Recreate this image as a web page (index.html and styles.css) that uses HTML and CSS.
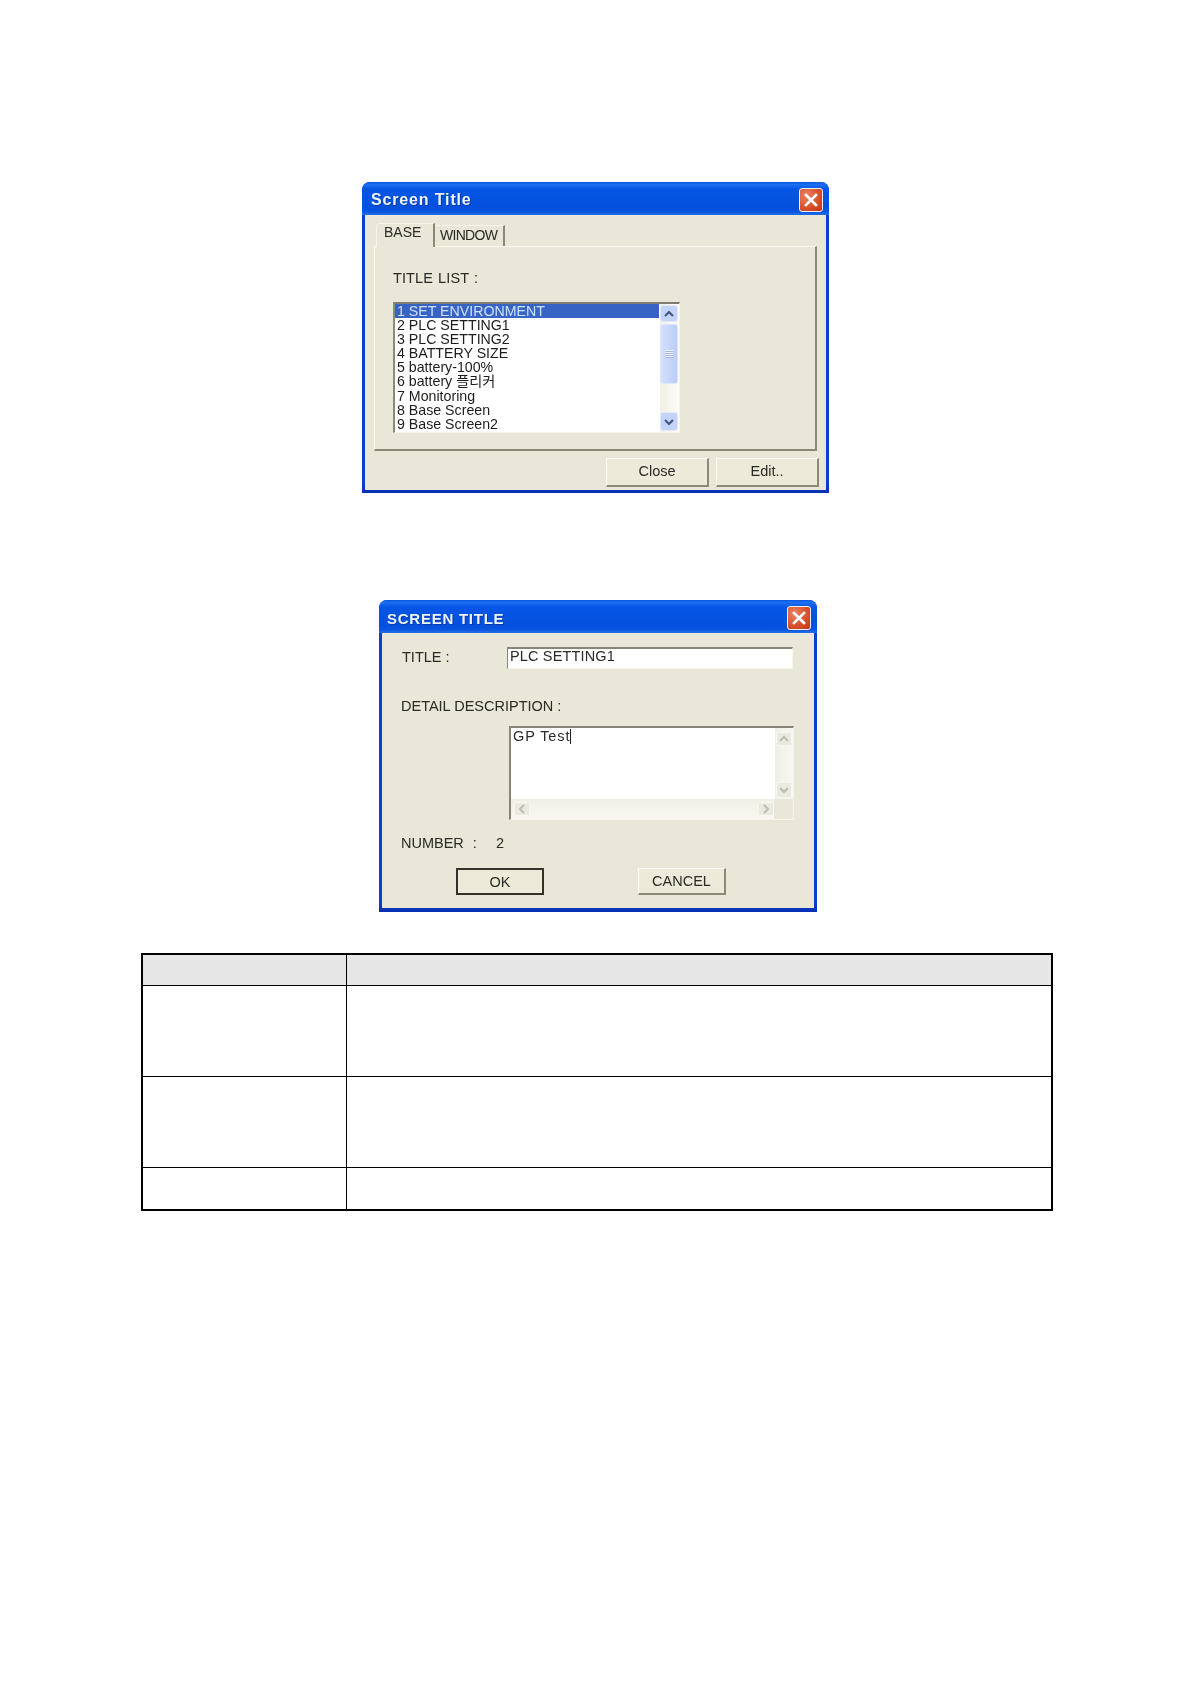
FILE: index.html
```html
<!DOCTYPE html>
<html lang="en">
<head>
<meta charset="utf-8">
<title>Screen Title</title>
<link rel="stylesheet" href="styles.css">
</head>
<body>
<main class="page">

  <section class="dialog dialog-list">
    <header class="titlebar">
      <span class="title">Screen Title</span>
      <button class="close" type="button" aria-label="Close">
        <svg viewBox="0 0 24 24" class="close-x"><path d="M7 7l10 10M17 7L7 17"/></svg>
      </button>
    </header>
    <div class="client client-list">
      <div class="tabs">
        <div class="tab tab-active">BASE</div>
        <div class="tab tab-idle">WINDOW</div>
      </div>
      <div class="panel">
        <div class="label label-list">TITLE LIST :</div>
        <div class="listbox">
          <ul class="items">
            <li class="item item-selected">1 SET ENVIRONMENT</li>
            <li class="item">2 PLC SETTING1</li>
            <li class="item">3 PLC SETTING2</li>
            <li class="item">4 BATTERY SIZE</li>
            <li class="item">5 battery-100%</li>
            <li class="item">6 battery 플리커</li>
            <li class="item">7 Monitoring</li>
            <li class="item">8 Base Screen</li>
            <li class="item">9 Base Screen2</li>
            <li class="item">10 Screen</li>
          </ul>
          <div class="vscroll">
            <div class="sb-btn"><svg viewBox="0 0 12 12" class="chev"><path d="M2 8l4-4 4 4"/></svg></div>
            <div class="sb-thumb"><span class="grip"></span></div>
            <div class="sb-btn sb-btn-end"><svg viewBox="0 0 12 12" class="chev"><path d="M2 4l4 4 4-4"/></svg></div>
          </div>
        </div>
      </div>
      <div class="actions">
        <button class="btn btn-wide" type="button">Close</button>
        <button class="btn btn-wide" type="button">Edit..</button>
      </div>
    </div>
  </section>

  <section class="dialog dialog-edit">
    <header class="titlebar">
      <span class="title title-caps">SCREEN TITLE</span>
      <button class="close" type="button" aria-label="Close">
        <svg viewBox="0 0 24 24" class="close-x"><path d="M7 7l10 10M17 7L7 17"/></svg>
      </button>
    </header>
    <div class="client client-edit">
      <div class="row-title">
        <span class="label label-title">TITLE :</span>
        <div class="input">PLC SETTING1</div>
      </div>
      <div class="label label-detail">DETAIL DESCRIPTION :</div>
      <div class="memo">
        <div class="memo-top">
          <div class="memo-text"><span class="caret">GP Test</span></div>
          <div class="vscroll-off">
            <div class="off-btn"><svg viewBox="0 0 12 12" class="chev-off"><path d="M2 8l4-4 4 4"/></svg></div>
            <div class="off-btn off-btn-end"><svg viewBox="0 0 12 12" class="chev-off"><path d="M2 4l4 4 4-4"/></svg></div>
          </div>
        </div>
        <div class="memo-bottom">
          <div class="hscroll-off">
            <div class="off-btn"><svg viewBox="0 0 12 12" class="chev-off"><path d="M8 2L4 6l4 4"/></svg></div>
            <div class="off-btn off-btn-end-h"><svg viewBox="0 0 12 12" class="chev-off"><path d="M4 2l4 4-4 4"/></svg></div>
          </div>
        </div>
      </div>
      <div class="row-number">
        <span class="label">NUMBER</span>
        <span class="label number-colon">:</span>
        <span class="label number-value">2</span>
      </div>
      <div class="actions-edit">
        <button class="btn btn-mid btn-default" type="button">OK</button>
        <button class="btn btn-mid" type="button">CANCEL</button>
      </div>
    </div>
  </section>

  <table class="grid">
    <colgroup><col class="col-a"><col></colgroup>
    <thead>
      <tr class="r-head"><th></th><th></th></tr>
    </thead>
    <tbody>
      <tr class="r-tall"><td></td><td></td></tr>
      <tr class="r-tall"><td></td><td></td></tr>
      <tr class="r-short"><td></td><td></td></tr>
    </tbody>
  </table>

</main>
</body>
</html>
```

FILE: styles.css
```css
* { box-sizing: border-box; }

html, body { margin: 0; background: #fff; }

body {
  font-family: "Liberation Sans", "Noto Sans CJK KR", sans-serif;
  font-size: 14.5px;
  color: #2a2a26;
}

.page { width: 1191px; min-height: 1684px; padding-top: 182px; }

/* ---------- dialog frame ---------- */
.dialog {
  background: linear-gradient(#0a3fd2, #0a3fd2 97%, #0630b0);
  border-radius: 8px 8px 0 0;
  overflow: hidden;
  filter: blur(0.45px);
}
.dialog-list { width: 467px; height: 311px; margin-left: 362px; }
.dialog-edit { width: 438px; height: 312px; margin: 107px 0 0 379px; }

.titlebar {
  height: 33px;
  display: flex;
  align-items: center;
  justify-content: space-between;
  padding: 3px 6px 0 9px;
  background: linear-gradient(#0b58e0 0, #1b6ff0 8%, #0655e4 22%, #0450de 78%, #0a56e0 90%, #2470e6 100%);
}
.dialog-edit .titlebar { padding-left: 8px; }

.title {
  color: #eef4ff;
  font-weight: 700;
  font-size: 16px;
  letter-spacing: 0.85px;
  text-shadow: 1px 1px 0 #0a3aa8;
}
.title-caps { font-size: 15px; letter-spacing: 0.75px; }

.close {
  width: 24px;
  height: 24px;
  padding: 0;
  border: 1px solid #f3f0ee;
  border-radius: 3px;
  background: radial-gradient(circle at 30% 30%, #ea8262, #d8532e 55%, #bd3514);
  display: block;
}
.close-x { display: block; margin: -1px; width: 24px; height: 24px; }
.close-x path { fill: none; stroke: #fff; stroke-width: 2.6; stroke-linecap: square; }

.client { background: #e9e7d7; margin: 0 3px; height: 275px; }

/* ---------- list dialog ---------- */
.client-list { padding: 8px 8px 0 9px; }

.tabs { display: flex; align-items: flex-end; height: 23px; }
.tab { height: 100%; font-size: 14px; }
.tab-active {
  width: 59px;
  margin-left: 2px;
  padding: 0 0 0 7px;
  line-height: 17px;
  background: #e9e7d7;
  border-top: 1px solid #f6f5ea;
  border-left: 1px solid #f6f5ea;
  border-right: 2px solid #8a8976;
  border-radius: 4px 0 0 0;
  position: relative;
  z-index: 1;
  height: 24px;
  margin-bottom: -1px;
}
.tab-idle {
  width: 70px;
  height: 21px;
  padding: 1px 0 0 5px;
  line-height: 17px;
  letter-spacing: -0.7px;
  border-top: 1px solid #f6f5ea;
  border-right: 2px solid #8a8976;
}

.panel {
  width: 443px;
  height: 205px;
  padding: 21px 0 0 18px;
  border-top: 1px solid #fbfaf3;
  border-left: 1px solid #fbfaf3;
  border-right: 2px solid #8a8976;
  border-bottom: 2px solid #8a8976;
}

.label { line-height: 20px; }
.label-list { word-spacing: 1px; letter-spacing: 0.1px; }

.listbox {
  width: 287px;
  height: 131px;
  margin-top: 14px;
  display: flex;
  background: #fff;
  border-top: 2px solid #7d7c70;
  border-left: 2px solid #8b8a7e;
  border-right: 1px solid #f6f5ec;
  border-bottom: 1px solid #f6f5ec;
  overflow: hidden;
}
.items {
  list-style: none;
  margin: 0;
  padding: 0;
  flex: 1;
  overflow: hidden;
  min-width: 0;
}
.item {
  height: 14.1px;
  line-height: 14px;
  font-size: 14.2px;
  padding-left: 2px;
  color: #1d1d1b;
  white-space: nowrap;
}
.item-selected { background: #3763c4; color: #cfe0ff; margin-right: 1px; }

.vscroll {
  width: 19px;
  flex: none;
  display: flex;
  flex-direction: column;
  padding: 1px 1px 1px 0;
  background: linear-gradient(90deg, #f1f0e6, #fcfbf6);
}
.sb-btn {
  height: 17px;
  flex: none;
  display: flex;
  align-items: center;
  justify-content: center;
  background: #c4d3f9;
  border: 1px solid #e3e9fb;
  border-radius: 3px;
}
.sb-btn-end { margin-top: auto; height: 19px; }
.chev { width: 12px; height: 12px; display: block; }
.chev path { fill: none; stroke: #46597e; stroke-width: 2.2; }
.sb-thumb {
  height: 60px;
  margin-top: 2px;
  display: flex;
  align-items: center;
  justify-content: center;
  background: linear-gradient(90deg, #d4dffc, #bccdf8);
  border: 1px solid #dde5fb;
  border-radius: 3px;
}
.grip {
  width: 8px;
  height: 8px;
  background: repeating-linear-gradient(#eef2fd 0 1px, #a7b8e8 1px 2px);
}

.actions { display: flex; justify-content: flex-end; gap: 7px; margin: 7px -1px 0 0; }

.btn {
  font: inherit;
  color: inherit;
  padding: 0;
  background: #ecead9;
  border-top: 1px solid #fbfaf3;
  border-left: 1px solid #fbfaf3;
  border-right: 2px solid #8b8a76;
  border-bottom: 2px solid #8b8a76;
}
.btn-wide { width: 103px; height: 29px; padding-bottom: 2px; }
.btn-mid { width: 88px; height: 27px; }
.btn-default { border: 2px solid #33332c; }

/* ---------- edit dialog ---------- */
.client-edit { padding: 14px 0 0 19px; }

.row-title { display: flex; align-items: center; padding-left: 1px; }
.label-title { width: 105px; line-height: 18px; padding-bottom: 2px; }
.input {
  width: 286px;
  height: 22px;
  padding-left: 2px;
  line-height: 15px;
  letter-spacing: 0.15px;
  background: #fff;
  border-top: 2px solid #86857a;
  border-left: 1px solid #86857a;
  border-right: 1px solid #f6f5ec;
  border-bottom: 1px solid #f6f5ec;
}

.label-detail { margin-top: 27px; }

.memo {
  width: 285px;
  height: 94px;
  margin: 10px 0 0 108px;
  display: flex;
  flex-direction: column;
  border-top: 2px solid #86857a;
  border-left: 2px solid #86857a;
  border-right: 1px solid #f6f5ec;
  border-bottom: 1px solid #f6f5ec;
  background: #e9e7d7;
}
.memo-top { height: 71px; display: flex; flex: none; }
.memo-text {
  flex: 1;
  background: #fff;
  padding-left: 2px;
  line-height: 17px;
}
.caret { display: inline-block; border-right: 1px solid #222; line-height: 15px; letter-spacing: 0.9px; }

.vscroll-off {
  width: 18px;
  flex: none;
  display: flex;
  flex-direction: column;
  padding: 4px 1px 1px;
  background: linear-gradient(90deg, #efeee6, #f8f7f1);
}
.off-btn {
  width: 16px;
  height: 14px;
  flex: none;
  display: flex;
  align-items: center;
  justify-content: center;
  background: #ebeae0;
  border: 1px solid #f7f6f0;
  border-radius: 2px;
}
.off-btn-end { margin-top: auto; height: 16px; }
.off-btn-end-h { margin-left: auto; }
.chev-off { width: 12px; height: 12px; display: block; }
.chev-off path { fill: none; stroke: #bdbcb0; stroke-width: 2; }

.memo-bottom { flex: 1; display: flex; }
.hscroll-off {
  width: 263px;
  display: flex;
  align-items: flex-start;
  padding: 3px 0 0 3px;
  background: linear-gradient(#f1f0e8, #f8f7f1);
}

.row-number { display: flex; margin-top: 13px; }
.number-colon { margin-left: 9px; }
.number-value { margin-left: 19px; }

.actions-edit { display: flex; gap: 94px; margin: 15px 0 0 55px; }

/* ---------- table ---------- */
.grid {
  width: 912px;
  margin: 41px 0 0 141px;
  border-collapse: collapse;
  table-layout: fixed;
  border: 2px solid #000;
}
.col-a { width: 204px; }
.grid th, .grid td { border: 1px solid #000; padding: 0; }
.grid th { background: #e6e6e6; }
.r-head { height: 31px; }
.r-tall { height: 91px; }
.r-short { height: 43px; }
```
